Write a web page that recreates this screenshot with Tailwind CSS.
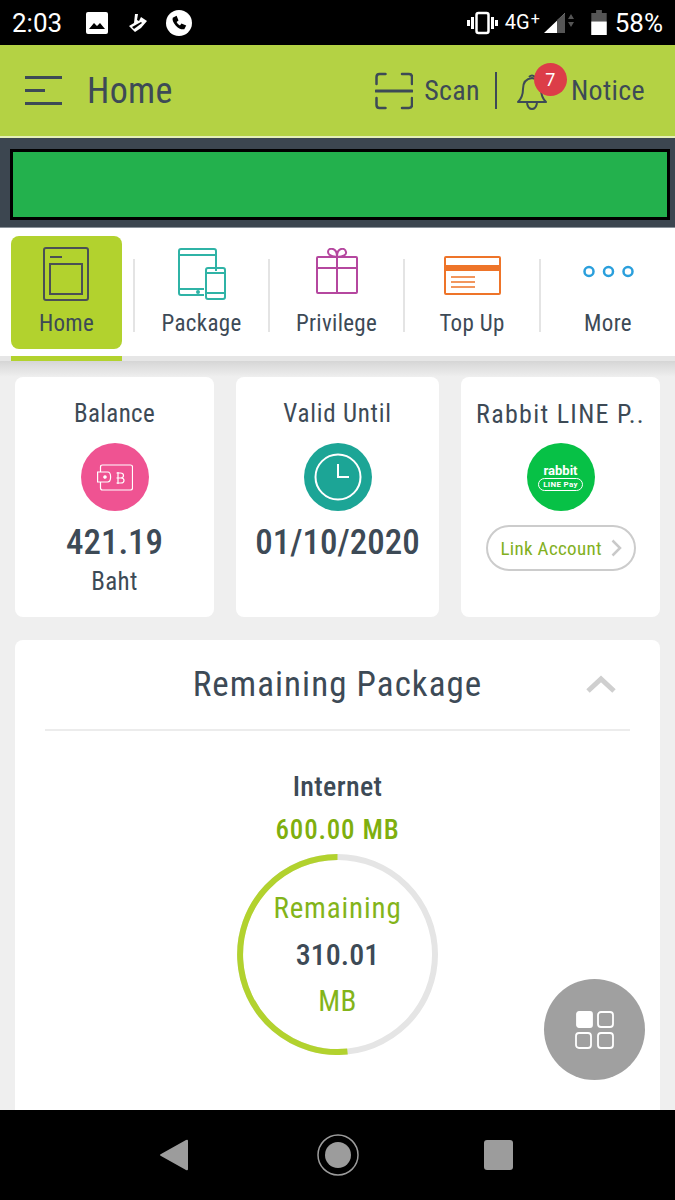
<!DOCTYPE html>
<html lang="en">
<head>
    <meta charset="UTF-8">
    <meta name="viewport" content="width=device-width, initial-scale=1.0">
    <title>Home</title>
    <script src="https://cdn.jsdelivr.net/npm/@tailwindcss/browser@4"></script>
</head>
<body class="bg-[#efefef] text-[#3d4a56] font-['Roboto',sans-serif] tracking-[0.02em]">
<div class="relative w-[675px] h-[1200px] overflow-hidden flex flex-col bg-[#efefef]">

    <!-- Status bar -->
    <div class="h-[45px] bg-black text-white flex items-center pl-3 pr-3 shrink-0 tracking-normal">
        <span class="text-[26px] w-[62px] leading-none">2:03</span>
        <svg class="ml-[12px]" width="22" height="22" viewBox="0 0 22 22"><rect width="22" height="22" rx="2" fill="#fff"/><path d="M3 17l5-6 3 3 3-3 5 6z" fill="#000"/></svg>
        <svg class="ml-[21px]" width="18" height="18" viewBox="0 0 18 18" fill="#fff"><path d="M0 12l5-3 1-9h3l-1 6 2 1 2-4 6 4-6 7-6 4z"/><path d="M3 13l9-5 1 1-8 6z" fill="#000"/></svg>
        <svg class="ml-[19px]" width="26" height="26" viewBox="0 0 27 27"><circle cx="13.500" cy="13.500" r="13.500" fill="#fff"/><path d="M7 8l4-2 2 5-2 1.500q1 2.500 3.500 3.500l1.500-2 5 2-2 4q-5 .5-9-4t-3-8z" fill="#000"/></svg>
        <svg class="ml-auto" width="31" height="24" viewBox="0 0 31 24" fill="none" stroke="#fff"><rect x="9.500" y="2" width="12" height="20" rx="2" stroke-width="2.500"/><path d="M5.500 6v12M1.500 9v6M25.500 6v12M29.500 9v6" stroke-width="3"/></svg>
        <span class="ml-[7px] text-[20px] leading-none relative -top-[1px]">4G<sup class="text-[16px] -top-[5px] ml-[1px]">+</sup></span>
        <svg class="ml-[3px]" width="34" height="26" viewBox="0 0 34 26"><path d="M1 23L22 3v20z" fill="#fff"/><path d="M14 23V10l8-7v20z" fill="#555"/><path d="M25 9l3-5 3 5zM25 12l3 5 3-5z" fill="#555"/></svg>
        <svg class="ml-[14px]" width="16" height="25" viewBox="0 0 16 26"><path d="M5 0h6v3h5v23H0V3h5z" fill="#555"/><path d="M0 12h16v14H0z" fill="#fff"/></svg>
        <span class="ml-[8px] text-[26px] leading-none">58%</span>
    </div>

    <!-- Header -->
    <div class="h-[93px] bg-[#b4d244] flex items-center pl-[25px] pr-[30px] shrink-0 border-b-2 border-[#e5efb8]">
        <div class="w-[37px] flex flex-col gap-[10px]">
            <div class="h-[3px] bg-[#3d4a56]"></div>
            <div class="h-[3px] w-[20px] bg-[#3d4a56]"></div>
            <div class="h-[3px] bg-[#3d4a56]"></div>
        </div>
        <span class="ml-[25px] text-[36px] font-normal leading-none [font-stretch:condensed]">Home</span>
        <svg class="ml-auto" width="38" height="38" viewBox="0 0 38 38" fill="none" stroke="#3d4a56" stroke-width="2.500" stroke-linecap="round"><path d="M1.500 12V5q0-3 3-3h6M27 2h7q3 0 3 3v7M1.500 26v7q0 3 3 3h6M27 36h7q3 0 3-3v-7"/><path d="M1 19h36" stroke-width="3"/></svg>
        <span class="ml-[11px] text-[28px] font-normal leading-none [font-stretch:condensed]">Scan</span>
        <div class="ml-[15px] w-[2px] h-[37px] bg-[#3d4a56]"></div>
        <div class="relative ml-[19px] w-[52px] h-[40px]">
            <svg width="32" height="40" viewBox="0 0 32 40" fill="none" stroke="#3d4a56" stroke-width="2"><path d="M2 31q5-5 5-13 0-10 9-11 9 1 9 11 0 8 5 13z" stroke-linejoin="round"/><path d="M11 32q1 6 5 6t5-6M13 6q3-3 6 0"/></svg>
            <div class="absolute -top-[8px] left-[18px] w-[33px] h-[33px] rounded-full bg-[#dc3d48] text-white text-[18px] font-normal flex items-center justify-center">7</div>
        </div>
        <span class="ml-[3px] text-[28px] font-normal leading-none [font-stretch:condensed]">Notice</span>
    </div>

    <!-- Banner -->
    <div class="h-[90px] bg-[#3c4650] pl-[10px] pr-[5px] pt-[11px] shrink-0 border-b border-[#8a929a]">
        <div class="h-[71px] bg-[#23b14d] border-[3px] border-black"></div>
    </div>

    <!-- Menu -->
    <div class="h-[128px] bg-white flex shrink-0 relative pl-[11px] pt-[8px]">
        <div class="w-[111px] h-[113px] rounded-lg bg-[#b2d22e] flex flex-col items-center pt-[11px]">
            <svg class="-ml-[2px]" width="46" height="54" viewBox="0 0 46 54" fill="none" stroke="#4a4f55" stroke-width="2"><rect x="1" y="1" width="44" height="52" rx="2"/><rect x="7" y="17" width="32" height="30"/><path d="M7 10h12"/></svg>
            <span class="mt-[11px] text-[23px] font-normal leading-none [font-stretch:condensed]">Home</span>
        </div>
        <div class="w-[2px] h-[73px] mt-[23px] ml-[11px] bg-[#e4e4e4]"></div>
        <div class="w-[133px] flex flex-col items-center pt-[12px]">
            <svg width="48" height="52" viewBox="0 0 48 52" fill="none" stroke="#2fb3a6" stroke-width="2"><path d="M26 47H3q-2 0-2-2V3q0-2 2-2h33q2 0 2 2v20M1 7h37M1 41h25"/><circle cx="20" cy="44" r="1" fill="#2fb3a6"/><rect x="28" y="20" width="19" height="31" rx="2"/><path d="M28 25h19M28 45h19"/></svg>
            <span class="mt-[12px] text-[23px] font-normal leading-none [font-stretch:condensed]">Package</span>
        </div>
        <div class="w-[2px] h-[73px] mt-[23px] bg-[#e4e4e4]"></div>
        <div class="w-[133px] flex flex-col items-center pt-[12px]">
            <svg width="42" height="52" viewBox="0 0 42 52" fill="none" stroke="#b5479f" stroke-width="2"><rect x="1" y="9" width="40" height="36" rx="1"/><path d="M1 20h40M21 9v36M21 9q-9-1-9-5t5-3q4 1 4 8 0-7 4-8t5 3-9 5z"/></svg>
            <span class="mt-[12px] text-[23px] font-normal leading-none [font-stretch:condensed]">Privilege</span>
        </div>
        <div class="w-[2px] h-[73px] mt-[23px] bg-[#e4e4e4]"></div>
        <div class="w-[134px] flex flex-col items-center pt-[12px]">
            <svg class="mt-[8px]" width="57" height="40" viewBox="0 0 57 40" fill="none" stroke="#ee7429" stroke-width="2"><rect x="1" y="1" width="55" height="37" rx="1"/><path d="M1 12h55" stroke-width="6"/><path d="M7 21h24M7 26h24M7 31h24" stroke-width="1.500"/></svg>
            <span class="mt-[16px] text-[23px] font-normal leading-none [font-stretch:condensed]">Top Up</span>
        </div>
        <div class="w-[2px] h-[73px] mt-[23px] bg-[#e4e4e4]"></div>
        <div class="w-[134px] flex flex-col items-center pt-[12px]">
            <svg class="mt-[17px] mb-[34px]" width="53" height="13" viewBox="0 0 53 13" fill="none" stroke="#2a9fdc" stroke-width="2.500"><circle cx="7" cy="6.500" r="4.500"/><circle cx="26.500" cy="6.500" r="4.500"/><circle cx="46" cy="6.500" r="4.500"/></svg>
            <span class="text-[23px] font-normal leading-none [font-stretch:condensed]">More</span>
        </div>
    </div>

    <!-- Shadow strip -->
    <div class="h-[21px] shrink-0 relative bg-gradient-to-b from-[#d6d6d6] from-25% to-[#efefef]">
        <div class="absolute left-0 top-0 w-full h-[5px] bg-[#e6e6e6]"></div>
        <div class="absolute left-[11px] top-0 w-[111px] h-[5px] bg-[#b2d22e]"></div>
    </div>

    <!-- Info cards -->
    <div class="flex gap-[22px] px-[15px] shrink-0">
        <div class="w-[199px] h-[240px] bg-white rounded-lg flex flex-col items-center pt-[22px]">
            <span class="text-[25px] font-normal leading-[30px] [font-stretch:condensed]">Balance</span>
            <div class="mt-[14px] w-[68px] h-[68px] rounded-full bg-[#ef5392] flex items-center justify-center">
                <svg width="36" height="27" viewBox="0 0 36 27" fill="none" stroke="#fff" stroke-width="1.200"><path d="M3.500 8V3q0-2 2-2h28q2 0 2 2v21q0 2-2 2h-28q-2 0-2-2v-6"/><path d="M.6 8h10q3 0 3 5t-3 5H.6z"/><circle cx="8" cy="13" r="1.200" fill="#fff"/><path d="M21 8v12M19.500 9h4q3 0 3 2.500t-3 2.500h-4M19.500 14h4.500q3 0 3 2.500t-3 2.500h-4.500"/></svg>
            </div>
            <span class="mt-[14px] text-[35px] font-medium tracking-normal leading-none [font-stretch:condensed]">421.19</span>
            <span class="mt-[9px] text-[25px] font-normal leading-none [font-stretch:condensed]">Baht</span>
        </div>
        <div class="w-[203px] h-[240px] bg-white rounded-lg flex flex-col items-center pt-[22px]">
            <span class="text-[25px] font-normal tracking-[0.03em] leading-[30px] [font-stretch:condensed]">Valid Until</span>
            <div class="mt-[14px] w-[68px] h-[68px] rounded-full bg-[#1ca596] flex items-center justify-center">
                <svg width="48" height="48" viewBox="0 0 48 48" fill="none" stroke="#fff" stroke-width="2"><circle cx="24" cy="24" r="22.500"/><path d="M24 11v13h11"/></svg>
            </div>
            <span class="mt-[14px] text-[35px] font-medium tracking-normal leading-none [font-stretch:condensed]">01/10/2020</span>
        </div>
        <div class="w-[199px] h-[240px] bg-white rounded-lg flex flex-col items-center pt-[22px]">
            <span class="text-[26px] font-normal tracking-[0.05em] leading-[30px] whitespace-nowrap [font-stretch:condensed]">Rabbit LINE P..</span>
            <div class="mt-[14px] w-[68px] h-[68px] rounded-full bg-[#07c146] text-white flex flex-col items-center justify-center">
                <span class="text-[13px] font-bold tracking-normal leading-none">rabbit</span>
                <span class="mt-[1px] border border-white rounded-full px-[4px] text-[8px] font-bold leading-[11px]">LINE Pay</span>
            </div>
            <div class="mt-[14px] w-[150px] h-[46px] rounded-full border-2 border-[#cccccc] flex items-center pl-[13px]">
                <span class="text-[19px] font-normal text-[#82b01e] leading-none [font-stretch:condensed]">Link Account</span>
                <svg class="ml-auto mr-[12px]" width="11" height="18" viewBox="0 0 11 18" fill="none" stroke="#c9c9c9" stroke-width="2.500"><path d="M1.500 1.500L9 9l-7.500 7.500"/></svg>
            </div>
        </div>
    </div>

    <!-- Remaining package -->
    <div class="mt-[23px] mx-[15px] w-[645px] h-[470px] bg-white rounded-t-lg shrink-0 flex flex-col items-center">
        <div class="w-[585px] h-[91px] border-b-2 border-[#ececec] flex items-center justify-center relative">
            <span class="text-[35px] font-normal tracking-[0.03em] leading-none [font-stretch:condensed]">Remaining Package</span>
            <svg class="absolute right-[14px] top-[35px]" width="30" height="18" viewBox="0 0 30 18" fill="none" stroke="#cfcfcf" stroke-width="5"><path d="M2 16L15 4l13 12"/></svg>
        </div>
        <span class="mt-[42px] text-[28px] font-medium leading-none [font-stretch:condensed]">Internet</span>
        <span class="mt-[16px] text-[27px] font-medium tracking-[0.03em] text-[#7faf0e] leading-none [font-stretch:condensed]">600.00 MB</span>
        <div class="mt-[10px] relative w-[201px] h-[201px]">
            <svg width="201" height="201" viewBox="0 0 202 202" fill="none" stroke-width="6">
                <circle cx="101" cy="101" r="98" stroke="#e5e5e5"/>
                <path d="M101 3A98 98 0 1 0 111 198.500" stroke="#b2d22e"/>
            </svg>
            <div class="absolute inset-0 flex flex-col items-center pt-[40px]">
                <span class="text-[29px] font-normal tracking-[0.03em] text-[#83b41a] leading-none [font-stretch:condensed]">Remaining</span>
                <span class="mt-[17px] text-[30px] font-medium tracking-normal leading-none [font-stretch:condensed]">310.01</span>
                <span class="mt-[17px] text-[29px] font-normal text-[#83b41a] leading-none [font-stretch:condensed]">MB</span>
            </div>
        </div>
    </div>

    <!-- Floating button -->
    <div class="absolute left-[544px] top-[979px] w-[101px] h-[101px] rounded-full bg-[#a0a0a0] flex items-center justify-center">
        <svg width="39" height="38" viewBox="0 0 39 38" fill="none" stroke="#fff" stroke-width="1.800"><rect x="2" y="1" width="15" height="15" rx="2" fill="#fff"/><rect x="23" y="1" width="15" height="15" rx="3"/><rect x="1" y="22" width="15" height="15" rx="3"/><rect x="23" y="22" width="15" height="15" rx="3"/></svg>
    </div>

    <!-- Android nav -->
    <div class="absolute left-0 top-[1110px] w-[675px] h-[90px] bg-black">
        <svg class="absolute left-[159px] top-[29px]" width="30" height="32" viewBox="0 0 30 32"><path d="M27 1q2-1 2 1v28q0 2-2 1L2 17q-2-1 0-2z" fill="#9c9c9c"/></svg>
        <svg class="absolute left-[316px] top-[23px]" width="44" height="44" viewBox="0 0 44 44" fill="none"><circle cx="22" cy="22" r="20" stroke="#9c9c9c" stroke-width="1.500"/><circle cx="22" cy="22" r="13" fill="#9c9c9c"/></svg>
        <div class="absolute left-[484px] top-[30px] w-[29px] h-[30px] rounded-[3px] bg-[#9c9c9c]"></div>
    </div>
</div>
</body>
</html>
